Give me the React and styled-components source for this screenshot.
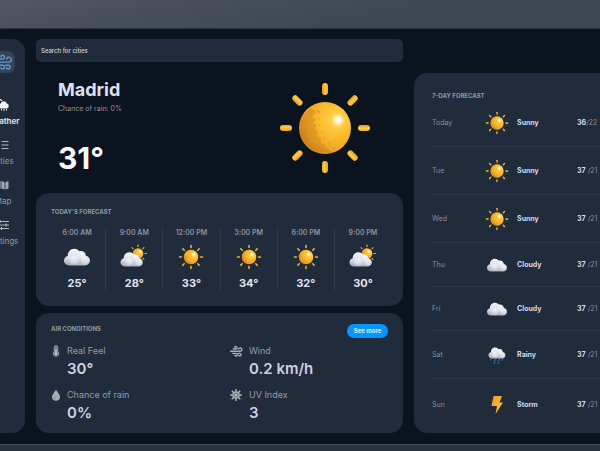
import React from "react";
import styled, { createGlobalStyle } from "styled-components";

const GlobalStyle = createGlobalStyle`
  *, *::before, *::after { box-sizing: border-box; }
  body {
    margin: 0;
    overflow: hidden;
    background: #2a3341;
    color: #dde0ee;
    font-family: Inter, "Open Sans", sans-serif;
    -webkit-font-smoothing: antialiased;
  }
  h1, h2, p, ul, ol, dl, dd { margin: 0; padding: 0; }
  ul, ol { list-style: none; }
`;

/* ---------- page frame ---------- */

const Backdrop = styled.div`
  min-height: 100vh;
  display: flex;
  flex-direction: column;
  padding: 28px 0 6px;
  overflow: hidden;
  background:
    linear-gradient(#2a3240, #2a3240) bottom / 100% 7px no-repeat,
    linear-gradient(170deg, #525864 0, #4a505d 28px, #3f4754 80px);
`;

const Window = styled.div`
  flex: 1;
  display: grid;
  grid-template-columns: 44px minmax(0, 17fr) minmax(0, 10fr);
  column-gap: 11px;
  margin: 0 -30px 0 -19px;
  padding: 10px 0 11px;
  background: #0b131e;
  border-top: 1px solid #2c3641;
  border-bottom: 1px solid #47525d;
`;

const Card = styled.section`
  background: #202b3b;
  border-radius: 13px;
`;

const CardTitle = styled.h2`
  font-size: 6px;
  line-height: 10px;
  font-weight: 700;
  text-transform: uppercase;
  color: #9399a2;
`;

/* ---------- sidebar ---------- */

const Sidebar = styled.nav`
  display: flex;
  flex-direction: column;
  align-items: center;
  padding: 12px 0;
  background: #202b3b;
  border-radius: 13px;
`;

const LogoTile = styled.a`
  display: grid;
  place-items: center;
  width: 24px;
  height: 22px;
  margin-bottom: 26px;
  border-radius: 7px;
  background: #364253;
  color: #5b9bd2;
`;

const NavList = styled.ul`
  display: grid;
  gap: 13px;
`;

const NavLink = styled.a`
  display: flex;
  flex-direction: column;
  align-items: center;
  gap: 5px;
  font-size: 8px;
  line-height: 10px;
  font-weight: ${(p) => (p.$active ? 600 : 400)};
  color: ${(p) => (p.$active ? "#e8ebf1" : "#949aa4")};
  text-decoration: none;
  svg { display: block; }
`;

/* ---------- main column ---------- */

const Main = styled.main`
  display: flex;
  flex-direction: column;
`;

const Search = styled.input`
  width: 100%;
  height: 23px;
  padding: 0 5px;
  border: 0;
  border-radius: 5px;
  background: #202b3b;
  color: #d4d8df;
  font: 500 6px/12px Inter, sans-serif;
  outline: none;
  &::placeholder { color: #d4d8df; opacity: 1; }
`;

const Hero = styled.section`
  flex: 1;
  display: flex;
  justify-content: space-between;
  align-items: center;
  padding: 16px 28px 15px 22px;
`;

const HeroText = styled.div`
  display: flex;
  flex-direction: column;
  align-self: stretch;
  justify-content: space-between;
`;

const City = styled.h1`
  font-size: 18px;
  line-height: 24px;
  font-weight: 700;
  color: #dde0ee;
`;

const Rain = styled.p`
  margin-top: 2px;
  font-size: 7px;
  line-height: 10px;
  color: #8e949e;
`;

const HeroTemp = styled.p`
  font-size: 30px;
  line-height: 40px;
  font-weight: 700;
  color: #f7f8fd;
`;

const HoursCard = styled(Card)`
  margin-bottom: 7px;
  padding: 14px 12px 15px;
  ${CardTitle} { margin-left: 3px; }
`;

const Hours = styled.ol`
  display: grid;
  grid-template-columns: repeat(6, minmax(0, 1fr));
  margin-top: 11px;
`;

const Hour = styled.li`
  display: flex;
  flex-direction: column;
  align-items: center;
  border-left: 1px solid #2f3a49;
  &:first-child { border-left-color: transparent; }
  svg { display: block; margin: 6px 0 5px; }
`;

const HourTime = styled.span`
  font-size: 7px;
  line-height: 10px;
  font-weight: 600;
  color: #8d939d;
`;

const HourTemp = styled.span`
  font-size: 11px;
  line-height: 16px;
  font-weight: 700;
  color: #e0e3f0;
`;

const AirCard = styled(Card)`
  padding: 11px 15px 9px;
`;

const AirHead = styled.header`
  display: flex;
  justify-content: space-between;
  align-items: flex-start;
`;

const MoreButton = styled.button`
  width: 41px;
  height: 14px;
  padding: 0;
  border: 0;
  border-radius: 7px;
  background: #0995ff;
  color: #d9efff;
  font: 700 6px/14px Inter, sans-serif;
`;

const AirGrid = styled.dl`
  display: grid;
  grid-template-columns: 179px minmax(0, 1fr);
  row-gap: 8px;
  margin-top: 6px;
`;

const Metric = styled.div`
  display: grid;
  grid-template-columns: ${(p) => (p.$wide ? "19px" : "16px")} 1fr;
  align-items: center;
`;

const MetricName = styled.dt`
  font-size: 9px;
  line-height: 14px;
  color: #959ba5;
`;

const MetricValue = styled.dd`
  grid-column: 2;
  font-size: 15px;
  line-height: 22px;
  font-weight: 600;
  color: #cdd1e2;
`;

/* ---------- week column ---------- */

const WeekCard = styled(Card)`
  margin: 34px 0 0;
  padding: 18px 18px 2px;
`;

const Days = styled.ul`
  margin-top: -2px;
`;

const Day = styled.li`
  display: grid;
  grid-template-columns: 54px 22px 60px 1fr;
  align-items: center;
  padding: 12px 0 11px;
  border-bottom: 1px solid ${(p) => (p.$last ? "transparent" : "#2d3847")};
  font-size: 7px;
  line-height: 10px;
  color: #8a909b;
  white-space: nowrap;
  svg { display: block; justify-self: center; overflow: visible; }
`;

const Sky = styled.span`
  padding-left: 9px;
  font-weight: 700;
  color: #d6dae8;
`;

const Range = styled.span`
  padding-left: 9px;
  b { font-weight: 700; color: #d6dae8; }
`;

/* ---------- drawings ---------- */

const DefsSvg = styled.svg`
  position: absolute;
  width: 0;
  height: 0;
`;

const Defs = () => (
  <DefsSvg aria-hidden="true">
    <defs>
      <radialGradient id="core" cx="0.72" cy="0.34" r="0.8">
        <stop offset="0" stopColor="#ffd65c" />
        <stop offset="0.4" stopColor="#fdbd2d" />
        <stop offset="0.75" stopColor="#eda326" />
        <stop offset="1" stopColor="#c67d1f" />
      </radialGradient>
      <radialGradient id="shine">
        <stop offset="0" stopColor="#fff" />
        <stop offset="0.4" stopColor="#fff5d8" stopOpacity="0.95" />
        <stop offset="1" stopColor="#ffd65c" stopOpacity="0" />
      </radialGradient>
      <linearGradient id="ray" x1="0" y1="0" x2="1" y2="0">
        <stop offset="0" stopColor="#e79c25" />
        <stop offset="0.6" stopColor="#ffcb48" />
        <stop offset="1" stopColor="#edab32" />
      </linearGradient>
      <linearGradient id="cloud" x1="0.5" y1="0" x2="0.4" y2="1">
        <stop offset="0" stopColor="#f4f5f9" />
        <stop offset="0.55" stopColor="#dcdfe7" />
        <stop offset="1" stopColor="#a3abbb" />
      </linearGradient>
      <radialGradient id="puff" cx="0.6" cy="0.3" r="0.75">
        <stop offset="0" stopColor="#ffffff" />
        <stop offset="0.6" stopColor="#e4e6ed" />
        <stop offset="1" stopColor="#b9c0cc" />
      </radialGradient>
      <linearGradient id="bolt" x1="0" y1="0" x2="1" y2="1">
        <stop offset="0" stopColor="#f29a26" />
        <stop offset="1" stopColor="#ffc83f" />
      </linearGradient>
    </defs>
  </DefsSvg>
);

const ANGLES = [0, 45, 90, 135, 180, 225, 270, 315];

const SunShape = ({ large }) => (
  <g>
    {ANGLES.map((a) => (
      <rect
        key={a}
        x="47"
        y={large ? 5 : 3}
        width="6"
        height={large ? 12 : 13}
        rx="3"
        fill="url(#ray)"
        transform={`rotate(${a} 50 50)`}
      />
    ))}
    <circle cx="50" cy="50" r={large ? 26 : 28} fill="url(#core)" />
    {large && (
      <g fill="#b96f18" opacity="0.3">
        <path d="M36 30C29 35 25 44 26 54C28 64 36 72 45 74L57 75L54 71L51 70L49 66L46 65L46 60L42 58L43 54L40 51L42 47L38 45L41 41L37 39L41 34Z" />
        <path d="M40 31l2 2 1-2 2 3-2 2zM43 39l2 1-1 2zM44 46l2 1-2 2zM46 53l2 1-1 2zM49 59l2 1-2 2zM53 64l2 1-1 2zM58 69l2 1-2 2z" />
        <path d="M30 56q6 4 11 1q3 7 7 10q-3 5-7 4q-8-5-11-15z" />
      </g>
    )}
    <circle cx={large ? 63 : 60} cy={large ? 42 : 40} r={large ? 8 : 10} fill="url(#shine)" />
  </g>
);

const Sun = ({ size, large }) => (
  <svg width={size} height={size} viewBox="0 0 100 100" role="img" aria-label="Sunny">
    <SunShape large={large} />
  </svg>
);

/* drawn in a 26 x 18 box */
const CloudShape = () => (
  <g>
    <path
      d="M5.500 17.500C2.300 17.500 0 15.300 0 12.600C0 10.200 1.700 8.300 3.800 7.900C3.600 3.900 6.600 0.800 10.300 0.800C12.500 0.800 14.300 1.800 15.400 3.300C18.600 2.300 21.700 4.500 21.900 7.800C24.300 8.300 26 10.200 26 12.500C26 15.300 23.700 17.500 20.700 17.500Z"
      fill="url(#cloud)"
    />
    <circle cx="16.500" cy="8.500" r="5" fill="url(#puff)" opacity="0.6" />
    <circle cx="9.500" cy="12" r="5" fill="url(#puff)" opacity="0.6" />
    <circle cx="20.500" cy="12.500" r="4.500" fill="url(#puff)" opacity="0.6" />
  </g>
);

const Cloud = ({ w, h }) => (
  <svg width={w} height={h} viewBox="0 0 26 18" role="img" aria-label="Cloudy">
    <CloudShape />
  </svg>
);

const PartlySunny = () => (
  <svg width="28" height="26" viewBox="0 0 28 26" role="img" aria-label="Partly sunny">
    <g transform="translate(8.500 0) scale(0.19)"><SunShape /></g>
    <g transform="translate(0.500 7.500) scale(0.86)"><CloudShape /></g>
  </svg>
);

const RainCloud = () => (
  <svg width="18" height="24" viewBox="0 0 18 24" role="img" aria-label="Rainy">
    <path d="M4 14l-1.500 3M8 15l-1.500 3M12 15l-1.500 3M15.500 14.500l-1.500 3M7 19l-1 1.500M11 19l-1 1.500" stroke="#5286b4" strokeWidth="0.8" strokeLinecap="round" />
    <g transform="translate(0.500 4) scale(0.65)"><CloudShape /></g>
  </svg>
);

const Bolt = () => (
  <svg width="22" height="28" viewBox="0 0 22 28" role="img" aria-label="Storm">
    <path d="M7.500 5h8.500l-2.500 6.500h3.500L9.500 23l1.500-8H5.500z" fill="url(#bolt)" />
  </svg>
);

const WindLines = ({ size, width }) => (
  <svg width={size} height={size} viewBox="0 0 24 24" fill="none" stroke="currentColor" strokeWidth={width} strokeLinecap="round" strokeLinejoin="round" aria-hidden="true">
    <path d="M6 7.500h5a2.300 2.300 0 1 0-2.200-3" />
    <path d="M1 11.500h18a3 3 0 1 0-2.900-4" />
    <path d="M5 15.500h6a2.400 2.400 0 1 1-2.300 3.200" />
    <path d="M15 15.500h3a2.400 2.400 0 1 1-2.300 3.200" />
  </svg>
);

const WeatherGlyph = () => (
  <svg width="14" height="12" viewBox="0 0 14 12" aria-hidden="true">
    <path d="M1 5.500a3 3 0 0 1 5-3.500M3 1L2 0M0.500 3.500H0" fill="none" stroke="#eef0f4" strokeWidth="1.200" />
    <path d="M5 9.500a2.500 2.500 0 0 1-.3-4.900A3.200 3.200 0 0 1 10.800 4.500 2.600 2.600 0 0 1 11 9.500z" fill="#f4f5f8" />
    <path d="M5.500 10v1.500M8 10v2M10.500 10v1.500" stroke="#f4f5f8" strokeWidth="1" />
  </svg>
);

const ListGlyph = () => (
  <svg width="12" height="12" viewBox="0 0 12 12" stroke="#b3b8c0" strokeWidth="1.200" aria-hidden="true">
    <path d="M4.500 2.500h7M4.500 6h7M4.500 9.500h7M1 2.500h1.800M1 6h1.800M1 9.500h1.800" />
  </svg>
);

const MapGlyph = () => (
  <svg width="12" height="12" viewBox="0 0 12 12" aria-hidden="true">
    <path d="M.5 3.200L3.600 2v7.500L.5 10.500zM4.400 2l3.200 1.200v7.300L4.400 9.500zM8.400 3.200L11.500 2v7.500l-3.100 1z" fill="#a2a8b1" />
  </svg>
);

const SlidersGlyph = () => (
  <svg width="12" height="12" viewBox="0 0 12 12" stroke="#b3b8c0" strokeWidth="1.200" aria-hidden="true">
    <path d="M0 2.500h12M0 6h12M0 9.500h12M3 1v3M9 4.500v3M4.500 8v3" />
  </svg>
);

const Thermometer = () => (
  <svg width="10" height="12" viewBox="0 0 10 12" aria-hidden="true">
    <path d="M3.200 2.500a1.800 1.800 0 0 1 3.600 0v4.100a2.700 2.700 0 1 1-3.600 0z" fill="#6f7783" stroke="#a0a6ae" strokeWidth="0.900" />
    <path d="M5 4v4.500" stroke="#d3d6da" strokeWidth="1" />
    <circle cx="5" cy="8.700" r="1.400" fill="#c0c4ca" />
  </svg>
);

const Drop = () => (
  <svg width="10" height="12" viewBox="0 0 10 12" aria-hidden="true">
    <path d="M5 .5C6 3 9 5.300 9 8a4 3.700 0 0 1-8 0C1 5.300 4 3 5 .5z" fill="#a7acb3" />
    <path d="M3 8a2 2 0 0 0 2 2" fill="none" stroke="#717985" strokeWidth="0.800" />
  </svg>
);

const UvGlyph = () => (
  <svg width="12" height="12" viewBox="0 0 12 12" fill="none" stroke="#b4b8bf" aria-hidden="true">
    <circle cx="6" cy="6" r="3.200" strokeWidth="1.200" fill="#6d7580" />
    <circle cx="6" cy="6" r="1.200" fill="#b4b8bf" strokeWidth="0.500" />
    {ANGLES.map((a) => (
      <path key={a} d="M6 0v2.500" strokeWidth="1.400" transform={`rotate(${a} 6 6)`} />
    ))}
  </svg>
);

const MetricIcon = styled.span`
  display: flex;
  color: #a5abb3;
`;

/* ---------- data ---------- */

const NAV = [
  ["Weather", <WeatherGlyph />],
  ["Cities", <ListGlyph />],
  ["Map", <MapGlyph />],
  ["Settings", <SlidersGlyph />],
];

const HOURS = [
  ["6:00 AM", "25°", <Cloud w={26} h={26} />],
  ["9:00 AM", "28°", <PartlySunny />],
  ["12:00 PM", "33°", <Sun size={26} />],
  ["3:00 PM", "34°", <Sun size={26} />],
  ["6:00 PM", "32°", <Sun size={26} />],
  ["9:00 PM", "30°", <PartlySunny />],
];

const METRICS = [
  ["Real Feel", "30°", <Thermometer />],
  ["Wind", "0.2 km/h", <WindLines size={13} width={2.6} />],
  ["Chance of rain", "0%", <Drop />],
  ["UV Index", "3", <UvGlyph />],
];

const DAYS = [
  ["Today", "Sunny", "36", "/22", <Sun size={24} />],
  ["Tue", "Sunny", "37", " /21", <Sun size={24} />],
  ["Wed", "Sunny", "37", " /21", <Sun size={24} />],
  ["Thu", "Cloudy", "37", " /21", <Cloud w={20} h={20} />],
  ["Fri", "Cloudy", "37", " /21", <Cloud w={20} h={20} />],
  ["Sat", "Rainy", "37", " /21", <RainCloud />],
  ["Sun", "Storm", "37", " /21", <Bolt />],
];

export default function App() {
  return (
    <Backdrop>
      <GlobalStyle />
      <Defs />
      <Window>
        <Sidebar aria-label="Main">
          <LogoTile href="#home" aria-label="Home">
            <WindLines size={19} width={1.8} />
          </LogoTile>
          <NavList>
            {NAV.map(([name, icon], i) => (
              <li key={name}>
                <NavLink href={`#${name.toLowerCase()}`} $active={i === 0}>
                  {icon}
                  {name}
                </NavLink>
              </li>
            ))}
          </NavList>
        </Sidebar>

        <Main>
          <Search type="search" placeholder="Search for cities" aria-label="Search for cities" />
          <Hero>
            <HeroText>
              <div>
                <City>Madrid</City>
                <Rain>Chance of rain: 0%</Rain>
              </div>
              <HeroTemp>31°</HeroTemp>
            </HeroText>
            <Sun size={100} large />
          </Hero>

          <HoursCard>
            <CardTitle>Today's forecast</CardTitle>
            <Hours>
              {HOURS.map(([time, temp, icon]) => (
                <Hour key={time}>
                  <HourTime>{time}</HourTime>
                  {icon}
                  <HourTemp>{temp}</HourTemp>
                </Hour>
              ))}
            </Hours>
          </HoursCard>

          <AirCard>
            <AirHead>
              <CardTitle>Air conditions</CardTitle>
              <MoreButton type="button">See more</MoreButton>
            </AirHead>
            <AirGrid>
              {METRICS.map(([name, value, icon], i) => (
                <Metric key={name} $wide={i % 2 === 1}>
                  <MetricIcon>{icon}</MetricIcon>
                  <MetricName>{name}</MetricName>
                  <MetricValue>{value}</MetricValue>
                </Metric>
              ))}
            </AirGrid>
          </AirCard>
        </Main>

        <WeekCard>
          <CardTitle>7-day forecast</CardTitle>
          <Days>
            {DAYS.map(([day, sky, high, low, icon], i) => (
              <Day key={day} $last={i === DAYS.length - 1}>
                <span>{day}</span>
                {icon}
                <Sky>{sky}</Sky>
                <Range>
                  <b>{high}</b>
                  {low}
                </Range>
              </Day>
            ))}
          </Days>
        </WeekCard>
      </Window>
    </Backdrop>
  );
}
